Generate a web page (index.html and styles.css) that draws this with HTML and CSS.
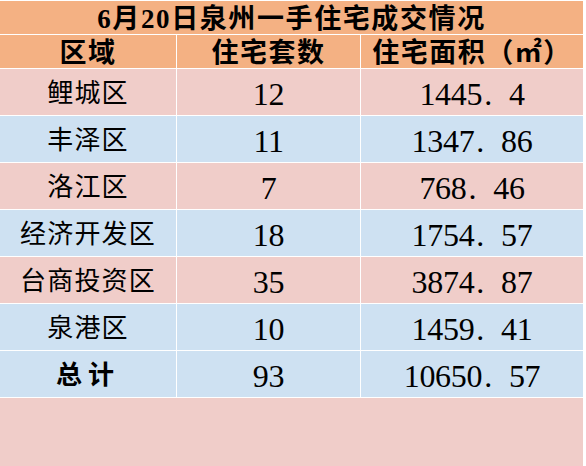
FILE: index.html
```html
<!DOCTYPE html>
<html lang="zh-CN">
<head>
<meta charset="utf-8">
<title>6月20日泉州一手住宅成交情况</title>
<link rel="stylesheet" href="styles.css">
</head>
<body>
<div class="page">
  <div class="sheet">
    <div class="cell title">6月20日泉州一手住宅成交情况</div>
    <div class="cell head">区域</div>
    <div class="cell head">住宅套数</div>
    <div class="cell head">住宅面积（㎡）</div>

    <div class="cell name pink">鲤城区</div>
    <div class="cell num pink">12</div>
    <div class="cell num pink">1445<span class="dot">.</span>4</div>

    <div class="cell name blue">丰泽区</div>
    <div class="cell num blue">11</div>
    <div class="cell num blue">1347<span class="dot">.</span>86</div>

    <div class="cell name pink">洛江区</div>
    <div class="cell num pink">7</div>
    <div class="cell num pink">768<span class="dot">.</span>46</div>

    <div class="cell name blue">经济开发区</div>
    <div class="cell num blue">18</div>
    <div class="cell num blue">1754<span class="dot">.</span>57</div>

    <div class="cell name pink">台商投资区</div>
    <div class="cell num pink">35</div>
    <div class="cell num pink">3874<span class="dot">.</span>87</div>

    <div class="cell name blue">泉港区</div>
    <div class="cell num blue">10</div>
    <div class="cell num blue">1459<span class="dot">.</span>41</div>

    <div class="cell name total blue">总计</div>
    <div class="cell num blue">93</div>
    <div class="cell num blue">10650<span class="dot">.</span>57</div>
  </div>
  <div class="filler"></div>
</div>
</body>
</html>
```
FILE: styles.css
```css
html, body {
  margin: 0;
  padding: 0;
  background: #ffffff;
}
body {
  width: 586px;
  height: 466px;
  overflow: hidden;
  font-family: "Liberation Serif", "Noto Sans CJK SC", serif;
  color: #000;
}
.page {
  width: 583px;
  padding-top: 1px;
  display: flex;
  flex-direction: column;
  gap: 1px;
}
.sheet {
  display: grid;
  grid-template-columns: 176px 183px 222px;
  grid-template-rows: 33px 33px repeat(7, 46px);
  column-gap: 1px;
  row-gap: 1px;
  width: 583px;
  background: #ffffff;
}
.cell {
  display: flex;
  align-items: center;
  justify-content: center;
  line-height: 1;
  white-space: nowrap;
  padding-top: 3px;
  box-sizing: border-box;
}
.title {
  grid-column: 1 / 4;
  background: #f4b183;
  font-size: 27px;
  font-weight: bold;
  letter-spacing: 1.6px;
  padding-top: 4px;
}
.head {
  background: #f4b183;
  font-size: 27px;
  font-weight: bold;
  letter-spacing: 1.5px;
  padding-top: 4px;
}
.name {
  font-size: 26px;
  letter-spacing: 1.2px;
}
.total {
  font-weight: bold;
  letter-spacing: 6px;
}
.num {
  font-size: 32px;
  letter-spacing: -0.3px;
}
.dot {
  padding: 0 17px 0 2px;
}
.pink {
  background: #f0cdc9;
}
.blue {
  background: #cee1f2;
}
.filler {
  height: 68px;
  background: #f0cdc9;
}
```
